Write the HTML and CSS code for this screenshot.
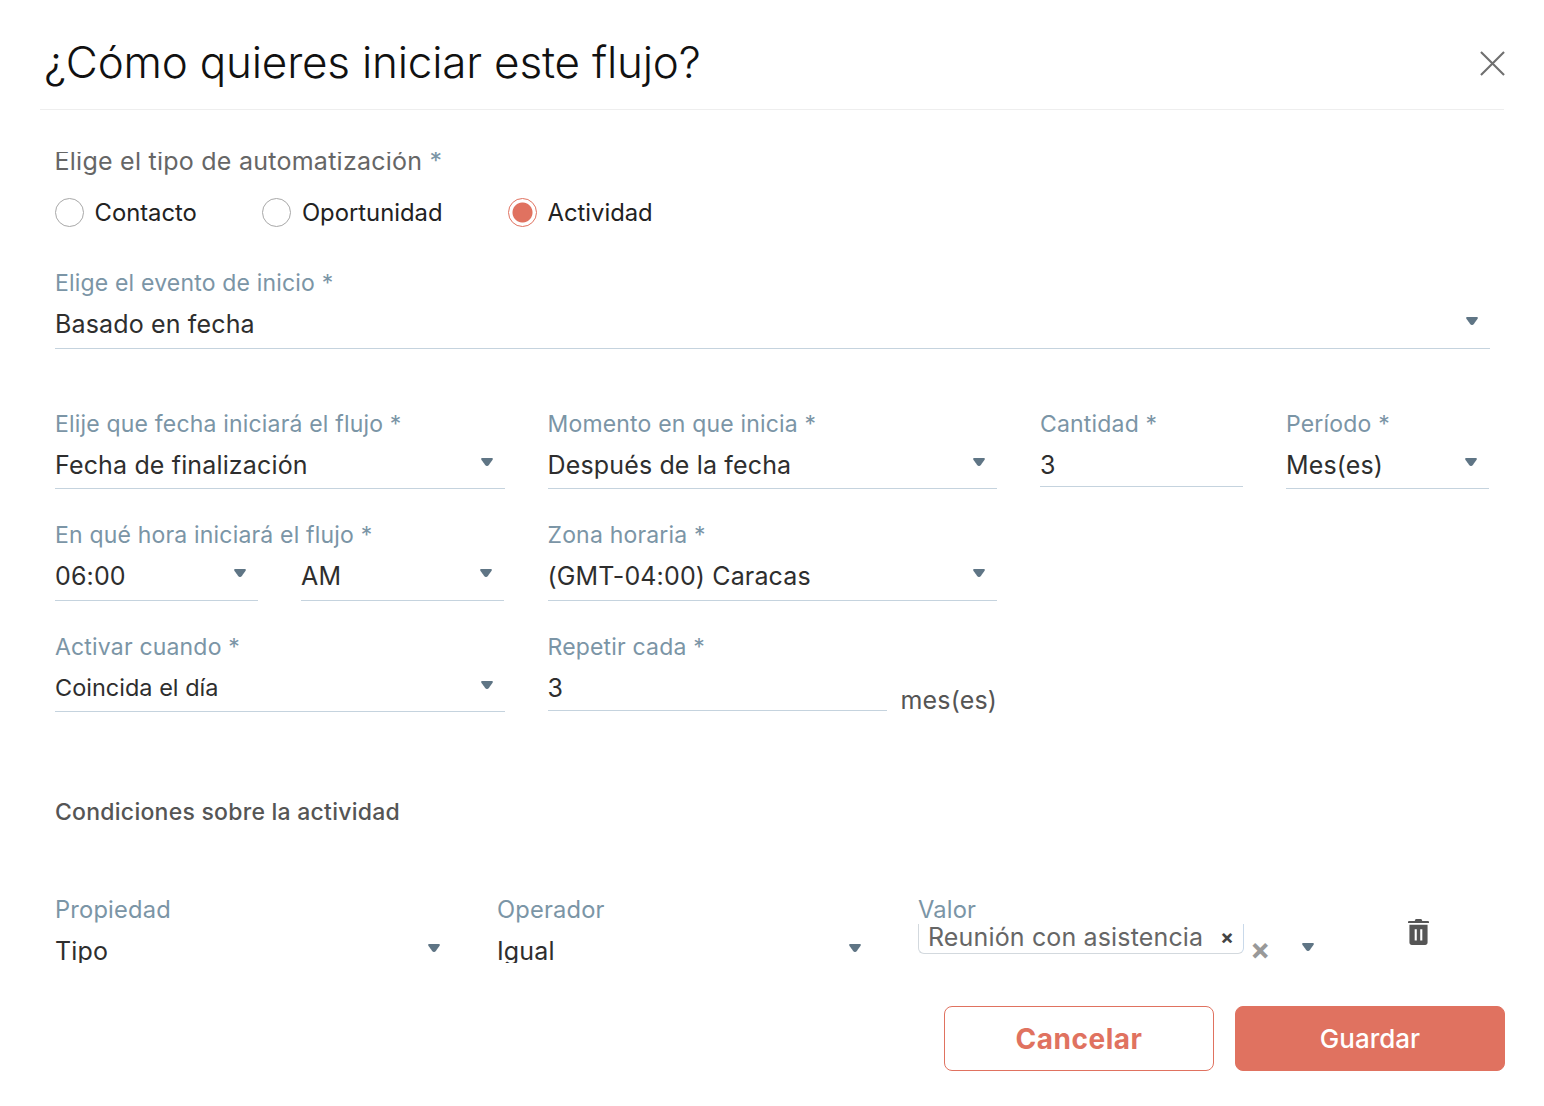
FILE: index.html
```html
<!DOCTYPE html>
<html lang="es">
<head>
<meta charset="utf-8">
<title>¿Cómo quieres iniciar este flujo?</title>
<link rel="stylesheet" href="styles.css">
</head>
<body>
<svg class="defs" width="0" height="0"><defs>
<symbol id="caret" viewBox="0 0 12 8"><path d="M.2 1.200C0 .6.500 0 1.200 0h9.600c.7 0 1.200.6 1 1.200-.3.800-3.600 5.400-4.400 6.300-.7.700-2.100.7-2.800 0C3.800 6.600.5 2 .2 1.200z"/></symbol>
</defs></svg>
<main class="modal">
  <header class="modal-head">
    <h1 class="title">¿Cómo quieres iniciar este flujo?</h1>
    <svg class="close" viewBox="0 0 26 26"><path d="M1 1l24 24M25 1L1 25"/></svg>
  </header>
  <div class="scroll">
    <div class="form">
      <section class="type">
        <p class="type-label">Elige el tipo de automatización <span class="star">*</span></p>
        <div class="radios">
          <label class="radio"><span class="dot"></span>Contacto</label>
          <label class="radio"><span class="dot"></span>Oportunidad</label>
          <label class="radio on"><span class="dot"></span>Actividad</label>
        </div>
      </section>
      <div class="field event tall">
        <span class="label">Elige el evento de inicio *</span>
        <div class="select"><span>Basado en fecha</span><svg class="caret"><use href="#caret"/></svg></div>
      </div>
      <div class="row first">
        <div class="field half"><span class="label">Elije que fecha iniciará el flujo *</span><div class="select"><span>Fecha de finalización</span><svg class="caret"><use href="#caret"/></svg></div></div>
        <div class="field half"><span class="label">Momento en que inicia *</span><div class="select"><span>Después de la fecha</span><svg class="caret"><use href="#caret"/></svg></div></div>
        <div class="field quarter"><span class="label">Cantidad *</span><div class="select input"><span>3</span></div></div>
        <div class="field quarter"><span class="label">Período *</span><div class="select"><span>Mes(es)</span><svg class="caret"><use href="#caret"/></svg></div></div>
      </div>
      <div class="row tall">
        <div class="half pair">
          <div class="field quarter"><span class="label nowrap">En qué hora iniciará el flujo *</span><div class="select"><span>06:00</span><svg class="caret"><use href="#caret"/></svg></div></div>
          <div class="field quarter"><span class="label">&nbsp;</span><div class="select"><span>AM</span><svg class="caret"><use href="#caret"/></svg></div></div>
        </div>
        <div class="field half"><span class="label">Zona horaria *</span><div class="select"><span>(GMT-04:00) Caracas</span><svg class="caret"><use href="#caret"/></svg></div></div>
      </div>
      <div class="row">
        <div class="field half"><span class="label">Activar cuando *</span><div class="select small"><span>Coincida el día</span><svg class="caret"><use href="#caret"/></svg></div></div>
        <div class="half repeat">
          <div class="field grow"><span class="label">Repetir cada *</span><div class="select input wide"><span>3</span></div></div>
          <span class="unit">mes(es)</span>
        </div>
      </div>
      <h2 class="section">Condiciones sobre la actividad</h2>
      <div class="cond">
        <div class="field prop"><span class="label big">Propiedad</span><div class="select plain"><span>Tipo</span><svg class="caret"><use href="#caret"/></svg></div></div>
        <div class="field oper"><span class="label big">Operador</span><div class="select plain"><span>Igual</span><svg class="caret"><use href="#caret"/></svg></div></div>
        <div class="field val">
          <span class="label big">Valor</span>
          <div class="val-line">
            <span class="chip">Reunión con asistencia<b class="chip-x">×</b></span>
            <b class="clear">×</b>
            <svg class="caret"><use href="#caret"/></svg>
          </div>
        </div>
        <svg class="trash" viewBox="0 0 22 27"><path d="M8 0h6l1 2h6c.6 0 1 .4 1 1v1H0V3c0-.6.4-1 1-1h6z"/><path fill-rule="evenodd" d="M1.500 6h19v18.500c0 1.400-1.100 2.500-2.500 2.500H4c-1.400 0-2.500-1.100-2.500-2.500zM7 10.500v12h2.200v-12zm5.800 0v12H15v-12z"/></svg>
      </div>
    </div>
  </div>
  <footer class="actions">
    <button class="btn ghost">Cancelar</button>
    <button class="btn solid">Guardar</button>
  </footer>
</main>
</body>
</html>
```
FILE: styles.css
```css
* { box-sizing: border-box; }
html, body { margin: 0; height: 100%; background: #fff; }
body { font-family: Inter, "Open Sans", sans-serif; color: #2e2e2e; overflow: hidden; }
.defs { position: absolute; }
.modal { width: 1544px; height: 1106px; padding: 0 39px 0 40px; display: flex; flex-direction: column; }
.modal-head { height: 110px; margin-right: 1px; border-bottom: 1px solid #eeeeee; display: flex; align-items: center; justify-content: space-between; padding: 16px 0 1px 4px; flex: none; }
.title { margin: 0; font-size: 44px; font-weight: 300; line-height: 56px; letter-spacing: -.2px; color: #111; }
.close { width: 25px; height: 25px; fill: none; stroke: #707070; stroke-width: 2.200; margin: 2px -1px 0 0; }
.scroll { margin-top: 42px; height: 811px; overflow: hidden; flex: none; }
.form { padding: 0 15px 0 14.500px; margin-top: -5px; }
.type-label { margin: 0; font-size: 25px; letter-spacing: .25px; line-height: 28px; color: #666; }
.star { color: #7b95a6; }
.radios { display: flex; gap: 65.500px; margin: 23px 0 0 .5px; }
.radio { display: flex; align-items: center; gap: 10.500px; font-size: 23.800px; line-height: 29px; color: #222; }
.dot { width: 29px; height: 29px; border-radius: 50%; border: 1px solid #a8a8a8; flex: none; }
.on .dot { border-color: #e07260; background: radial-gradient(circle, #e07260 0 9.500px, #fff 10.500px); }
.field { display: flex; flex-direction: column; min-width: 0; }
.label { font-size: 23px; letter-spacing: .18px; line-height: 28px; color: #7b95a6; white-space: nowrap; }
.big { font-size: 23.700px; }
.select { display: flex; justify-content: space-between; height: 51px; padding: 11px 12px 0 0; border-bottom: 1px solid #c5d3de; font-size: 25px; letter-spacing: .15px; line-height: 32px; color: #2e2e2e; }
.small { font-size: 23.500px; letter-spacing: 0; }
.tall .select { height: 52px; }
.select.input { height: 49px; }
.select.wide { height: 50px; }
.plain { border-bottom: 0; }
.caret { width: 12px; height: 8px; fill: #5f7585; margin-top: 9px; flex: none; }
.event { margin: 42px 0 0 .5px; }
.row { display: flex; gap: 43px; margin: 32px 0 0 .5px; align-items: flex-start; }
.first { margin-top: 61px; }
.half { width: 449.500px; flex: none; }
.quarter { width: 203px; flex: none; }
.pair { display: flex; gap: 43px; }
.repeat { display: flex; gap: 14px; align-items: flex-end; }
.grow { flex: 1; }
.unit { font-size: 25px; letter-spacing: .15px; line-height: 32px; color: #555; margin-bottom: -5px; }
.section { margin: 86px 0 0 .5px; font-size: 23px; letter-spacing: .25px; line-height: 28px; font-weight: 500; color: #555; }
.cond { display: flex; margin: 70px 0 0 .5px; align-items: flex-start; }
.prop { width: 397px; flex: none; }
.oper { width: 376px; flex: none; margin-left: 45px; }
.val { width: 396px; flex: none; margin-left: 45px; }
.val-line { display: flex; align-items: flex-start; }
.chip { display: flex; flex: none; align-items: center; justify-content: space-between; width: 326px; height: 30px; padding: 0 9px 4px 9px; border: 1px solid #d3d9de; border-right-color: #c9d9ea; border-top: 0; border-radius: 0 0 6px 6px; font-size: 25px; letter-spacing: .15px; line-height: 26px; color: #666; white-space: nowrap; }
.chip-x { font-size: 20px; color: #444; }
.clear { font-size: 30px; line-height: 30px; color: #999; margin: 10px 0 0 6px; }
.val-line .caret { margin: 19px 0 0 32px; }
.trash { width: 21px; height: 26px; fill: #555; margin: 23px 0 0 94px; flex: none; }
.actions { display: flex; justify-content: flex-end; gap: 21px; margin-top: 43px; }
.btn { width: 270px; height: 65px; border-radius: 8px; font-family: Inter, sans-serif; line-height: 1; cursor: pointer; }
.ghost { background: #fff; border: 1px solid #e07260; color: #e07260; font-size: 28px; font-weight: 700; letter-spacing: .5px; }
.solid { background: #e07260; border: 1px solid #e07260; color: #fff; font-size: 26px; font-weight: 500; }
```
